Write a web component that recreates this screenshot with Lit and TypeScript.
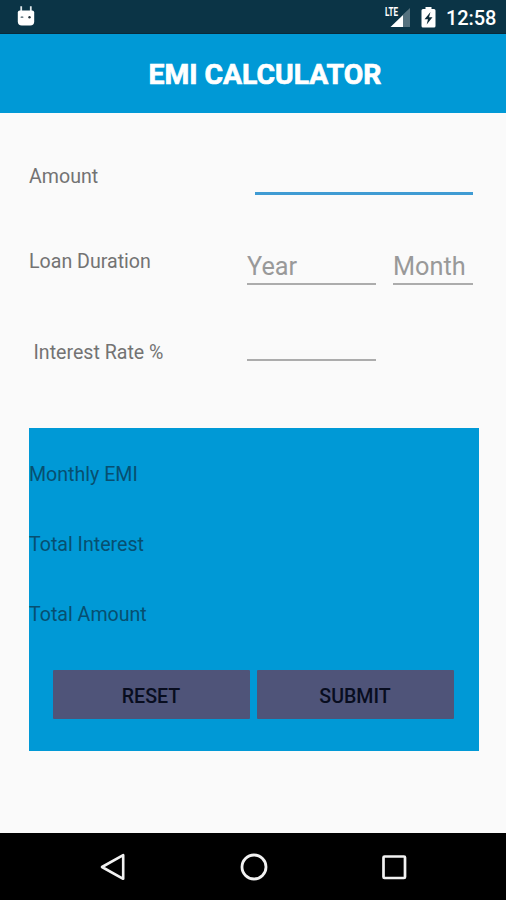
import { LitElement, html, css } from "lit";
import { customElement, property } from "lit/decorators.js";

@customElement("status-bar")
class StatusBar extends LitElement {
  static styles = css`
    :host { display: flex; justify-content: space-between; height: 34px; box-sizing: border-box;
      background: #0b3446; border-bottom: 1px solid #082a3a; padding: 0 10px 0 17px; }
    .robot { display: block; margin-top: 5px; }
    .right { display: flex; }
    .signal { margin: 3px 10px 0 0; overflow: visible; }
    .battery { margin: 7px 10px 0 0; }
    .lte { font: 700 12px Roboto, sans-serif; }
    .time { font-size: 20px; line-height: 37px; font-weight: 500; color: #fff; width: 50px; white-space: nowrap; letter-spacing: -.1px; }
  `;
  render() {
    return html`
      <svg class="robot" width="19" height="22" viewBox="0 0 19 22">
        <path d="M4.200 1.200V6M13.800 1.200V6" stroke="#dfe7ea" stroke-width="1.800" />
        <path d="M.8 7.500Q.8 5.500 2.800 5.500H15.200Q17.200 5.500 17.200 7.500V16.500Q17.200 20.500 13.200 20.500H4.800Q.8 20.500 .8 16.500Z" fill="#fff" />
        <ellipse cx="5" cy="12.200" rx="1.500" ry=".9" fill="#71828b" />
        <circle cx="12.500" cy="12.200" r="1.200" fill="#26343c" />
      </svg>
      <div class="right">
        <svg class="signal" width="26" height="25" viewBox="0 0 26 25">
          <path d="M25 5V24H18V11.500Z" fill="#55717e" />
          <path d="M18 12V24H5.500Z" fill="#fff" />
          <text class="lte" x="0" y="13" textLength="13" lengthAdjust="spacingAndGlyphs" fill="#fff">LTE</text>
        </svg>
        <svg class="battery" width="15" height="21" viewBox="0 0 15 21">
          <path d="M4.500 0H10.500V2H13Q14.500 2 14.500 3.500V19Q14.500 20.500 13 20.500H2Q.5 20.500 .5 19V3.500Q.5 2 2 2H4.500Z" fill="#fff" />
          <path d="M9.500 5 3.500 12.200H7L5.700 17.500 11.500 10.200H8Z" fill="#0b2a38" />
        </svg>
        <div class="time">12:58</div>
      </div>
    `;
  }
}

@customElement("line-field")
class LineField extends LitElement {
  @property() hint = "";
  static styles = css`
    :host { display: block; box-sizing: border-box; height: 36px; border-bottom: 2px solid #acacac;
      font-size: 25.300px; line-height: 35px; color: #999; white-space: nowrap; }
    :host([focused]) { border-bottom: 3px solid #3f9bd3; }
  `;
  render() {
    return html`${this.hint}`;
  }
}

@customElement("app-root")
class AppRoot extends LitElement {
  static styles = css`
    :host { display: flex; flex-direction: column; width: 506px; height: 900px; overflow: hidden;
      background: #fafafa; font-family: Roboto, "Liberation Sans", sans-serif; color: #737373; }
    .header { height: 79px; background: #0099d6; color: #fff; text-align: center; padding-left: 24px;
      box-sizing: border-box; font-size: 28.300px; line-height: 82px; font-weight: 700; -webkit-text-stroke: .7px #fff; }
    .main { flex: 1; display: flex; flex-direction: column; padding: 0 27px 0 29px; }
    .row { display: flex; justify-content: space-between; align-items: flex-start; }
    .label { font-size: 19.600px; line-height: 24px; }
    .amount { padding-top: 46px; height: 89px; box-sizing: border-box; }
    .amount .label { margin-top: 6px; }
    .amount line-field { width: 218px; margin-right: 6px; }
    .duration { height: 91px; padding-top: 47px; box-sizing: border-box; }
    .duration .label { margin-top: 1px; }
    .fields { display: flex; gap: 17px; margin-right: 6px; }
    .year { width: 129px; }
    .month { width: 80px; }
    .rate { height: 135px; padding-top: 32px; box-sizing: border-box; }
    .rate .label { margin: 16px 0 0 4.500px; }
    .rate line-field { margin-right: 103px; }
    .panel { height: 323px; box-sizing: border-box; background: #0099d6; padding-top: 34.500px; }
    .result { height: 70.400px; font-size: 19.600px; line-height: 24px; color: #074f70; }
    .buttons { display: flex; justify-content: center; gap: 7px; margin: -3.500px 2px 0 0; }
    .button { width: 197px; height: 49px; padding: 3px 0 0; border: 0; border-radius: 1px; background: #4f5479;
      font: 500 19.600px Roboto, sans-serif; color: #080d1f; }
    .nav { height: 67px; background: #000; display: flex; justify-content: center; align-items: center; gap: 112.500px; padding-left: 1px; }
    .nav svg { display: block; }
  `;
  render() {
    return html`
      <status-bar></status-bar>
      <div class="header">EMI CALCULATOR</div>
      <div class="main">
        <div class="row amount">
          <div class="label">Amount</div>
          <line-field focused></line-field>
        </div>
        <div class="row duration">
          <div class="label">Loan Duration</div>
          <div class="fields">
            <line-field class="year" hint="Year"></line-field>
            <line-field class="month" hint="Month"></line-field>
          </div>
        </div>
        <div class="row rate">
          <div class="label">Interest Rate %</div>
          <line-field class="year"></line-field>
        </div>
        <div class="panel">
          ${["Monthly EMI", "Total Interest", "Total Amount"].map((t) => html`<div class="result">${t}</div>`)}
          <div class="buttons">
            <button class="button">RESET</button>
            <button class="button">SUBMIT</button>
          </div>
        </div>
      </div>
      <div class="nav">
        <svg width="28" height="28" viewBox="0 0 28 28"><path d="M24.200 2.200V25.800L3 14Z" fill="none" stroke="#f2f2f2" stroke-width="2.600" stroke-linejoin="round" /></svg>
        <svg width="28" height="28" viewBox="0 0 28 28"><circle cx="14" cy="14" r="12" fill="none" stroke="#f2f2f2" stroke-width="2.800" /></svg>
        <svg width="28" height="28" viewBox="0 0 28 28"><rect x="3.500" y="3.500" width="21.500" height="21.500" rx="1" fill="none" stroke="#f2f2f2" stroke-width="2.700" /></svg>
      </div>
    `;
  }
}
